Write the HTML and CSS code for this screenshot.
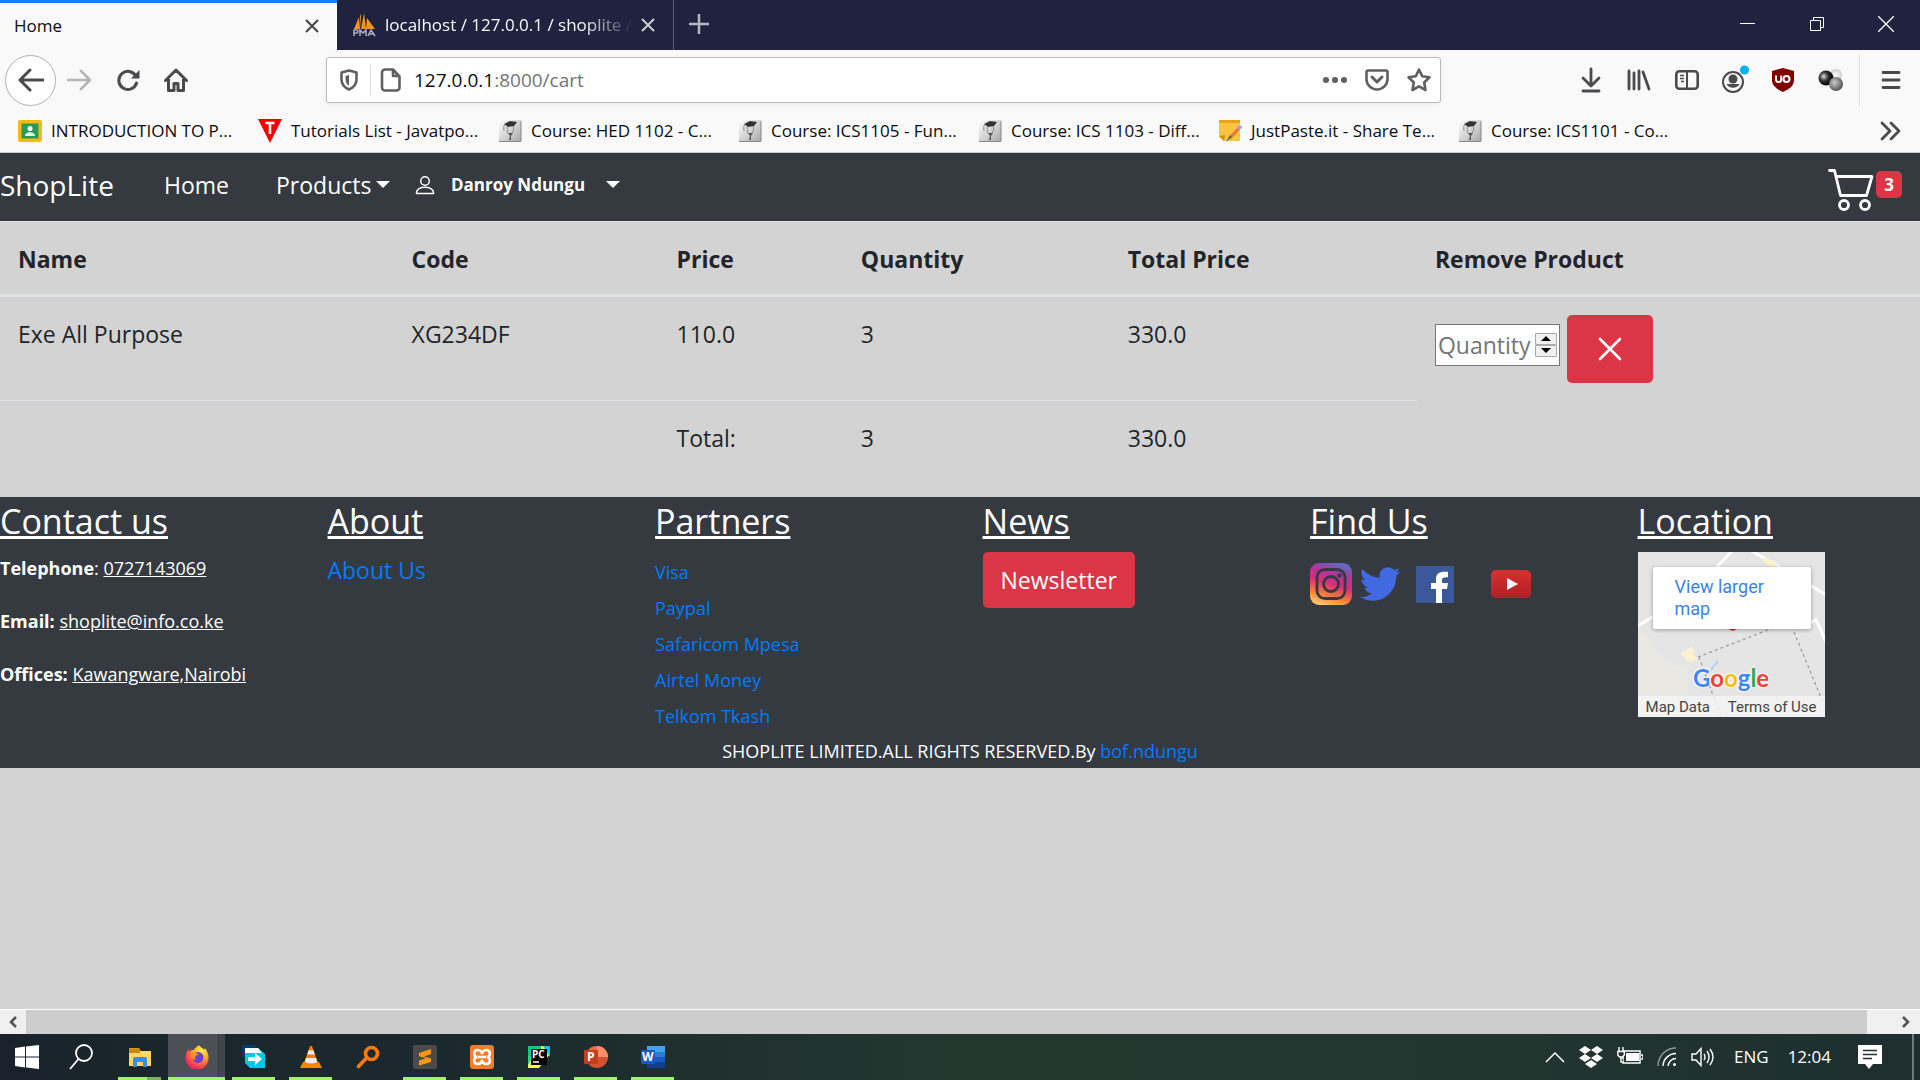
FILE: index.html
```html
<!DOCTYPE html>
<html lang="en">
<head>
<meta charset="utf-8">
<meta name="viewport" content="width=device-width, initial-scale=1">
<title>Home</title>
<link rel="stylesheet" href="styles.css">
</head>
<body>
<svg class="defs" aria-hidden="true">
  <defs>
    <linearGradient id="moodle-bg" x1="0" y1="0" x2="1" y2="1"><stop offset="0" stop-color="#fff"/><stop offset="1" stop-color="#a8a8a8"/></linearGradient>
    <linearGradient id="insta-bg" x1=".35" y1="1" x2=".65" y2="0"><stop offset="0" stop-color="#fdc468"/><stop offset=".22" stop-color="#fa7e3a"/><stop offset=".5" stop-color="#d62e77"/><stop offset=".75" stop-color="#b0359a"/><stop offset="1" stop-color="#5b6cc0"/></linearGradient>
    <linearGradient id="yt-bg" x1="0" y1="0" x2="0" y2="1"><stop offset="0" stop-color="#d8302f"/><stop offset="1" stop-color="#ae2026"/></linearGradient>
    <radialGradient id="fox-bg" cx=".7" cy=".2" r=".9"><stop offset="0" stop-color="#fff14f"/><stop offset=".45" stop-color="#ff9a2a"/><stop offset=".8" stop-color="#ff3a50"/><stop offset="1" stop-color="#e31587"/></radialGradient>
    <radialGradient id="ball-dark" cx=".35" cy=".4" r=".6"><stop offset="0" stop-color="#ddd"/><stop offset=".5" stop-color="#333"/><stop offset="1" stop-color="#000"/></radialGradient>
    <radialGradient id="ball-mid" cx=".4" cy=".4" r=".6"><stop offset="0" stop-color="#ccc"/><stop offset="1" stop-color="#555"/></radialGradient>
    <radialGradient id="ball-light" cx=".5" cy=".5" r=".5"><stop offset="0" stop-color="#fff"/><stop offset="1" stop-color="#ccc"/></radialGradient>
    <symbol id="moodle" viewBox="0 0 24 24">
      <rect x="1" y="1" width="22" height="22" rx="1" fill="url(#moodle-bg)"/>
      <path d="M1 22.500h22V2" fill="none" stroke="#888"/>
      <path d="M6 5l6-3 7 1-3 4-6 1z" fill="#333"/>
      <path d="M7 5c-2 3-1 4-1 7M9 8c1 3-1 4 2 7M15 7c1 3 1 5-2 8" fill="none" stroke="#888"/>
      <path d="M10 14h5l-2 3v4h-2l1-4z" fill="#555"/>
    </symbol>
  </defs>
</svg>

<header class="browser">
  <div class="tabstrip">
    <div class="tab tab-active"><span class="tab-title">Home</span>
      <button class="tab-close" aria-label="Close tab"><svg width="14" height="14" viewBox="0 0 14 14"><path d="M1 1l12 12M13 1L1 13" stroke="#444" stroke-width="2"/></svg></button></div>
    <div class="tab tab-idle">
      <svg width="26" height="26" viewBox="0 0 26 26"><path d="M3 17l5-12 1 12zM10 17V2l-1 2M10 17l3-16 2 16zM15 17l1-11 8 11z" fill="#f7941d"/><path d="M3 24v-6h3q2 1.500 0 3H3M9 24v-6l3 3 3-3v6M17 24l3-6 4 6M18.500 22h4" fill="none" stroke="#aab" stroke-width="1.600"/></svg>
      <span class="tab-title tab-title-fade">localhost / 127.0.0.1 / shoplite / </span>
      <button class="tab-close" aria-label="Close tab"><svg width="14" height="14" viewBox="0 0 14 14"><path d="M1 1l12 12M13 1L1 13" stroke="#ccc" stroke-width="2"/></svg></button></div>
    <button class="tab-new" aria-label="New tab"><svg width="22" height="22" viewBox="0 0 22 22"><path d="M11 1v20M1 11h20" stroke="#b5b5bf" stroke-width="2.500"/></svg></button>
    <div class="window-buttons">
      <button aria-label="Minimize"><svg width="16" height="16" viewBox="0 0 16 16"><path d="M0 7.500h15" stroke="#fff"/></svg></button>
      <button aria-label="Restore"><svg width="16" height="16" viewBox="0 0 16 16"><path d="M1.500 4.500h10v10h-10zM4.500 4V1.500h10v10H12" fill="none" stroke="#fff"/></svg></button>
      <button aria-label="Close"><svg width="16" height="16" viewBox="0 0 16 16"><path d="M0 0l16 16M16 0L0 16" stroke="#fff" stroke-width="1.300"/></svg></button>
    </div>
  </div>

  <div class="toolbar">
    <div class="nav-buttons">
      <button class="back" aria-label="Back"><svg width="26" height="24" viewBox="0 0 26 24"><path d="M12 2L2 12l10 10M2 12h23" fill="none" stroke="#4a4a4c" stroke-width="3" stroke-linecap="round" stroke-linejoin="round"/></svg></button>
      <button aria-label="Forward"><svg width="26" height="24" viewBox="0 0 26 24"><path d="M14 3l9 9-9 9M1 12h22" fill="none" stroke="#b5b5b6" stroke-width="2.600" stroke-linecap="round" stroke-linejoin="round"/></svg></button>
      <button aria-label="Reload"><svg width="24" height="24" viewBox="0 0 24 24"><path d="M20 8.500A9 9 0 1 0 20.500 15" fill="none" stroke="#4a4a4c" stroke-width="3" stroke-linecap="round"/><path d="M23.500 2v8.500H15z" fill="#4a4a4c"/></svg></button>
      <button aria-label="Home page"><svg width="24" height="24" viewBox="0 0 24 24"><path d="M1.500 12.500L12 2l10.500 10.500M4.500 11v11.500h5.500v-7h4v7h5.500V11" fill="none" stroke="#4a4a4c" stroke-width="3" stroke-linejoin="round" stroke-linecap="round"/></svg></button>
    </div>
    <div class="urlbar">
      <svg width="20" height="24" viewBox="0 0 20 24"><path d="M10 2.500l7.500 2v7c0 5-3 8-7.500 10-4.500-2-7.500-5-7.500-10v-7z" fill="none" stroke="#5f5f61" stroke-width="2.600" stroke-linejoin="round"/><path d="M10 7v11c-2.500-2-3.500-4-3.500-7V8z" fill="#5f5f61"/></svg>
      <span class="url-divider"></span>
      <svg width="22" height="26" viewBox="0 0 22 26"><path d="M5 2.500h8l6.500 7v11a3 3 0 0 1-3 3H5a3 3 0 0 1-3-3v-15a3 3 0 0 1 3-3zM13 3v6h6" fill="none" stroke="#5f5f61" stroke-width="2.600" stroke-linejoin="round"/></svg>
      <span class="url"><b>127.0.0.1</b>:8000/cart</span>
      <button aria-label="Page actions"><svg width="26" height="24" viewBox="0 0 26 24" fill="#5f5f61"><circle cx="4" cy="12" r="3"/><circle cx="13" cy="12" r="3"/><circle cx="22" cy="12" r="3"/></svg></button>
      <button aria-label="Save to Pocket"><svg width="26" height="24" viewBox="0 0 26 24"><path d="M4 2.500h18a1.500 1.500 0 0 1 1.500 1.500v7a10.500 10.500 0 0 1-21 0V4A1.500 1.500 0 0 1 4 2.500z" fill="none" stroke="#5f5f61" stroke-width="2.600"/><path d="M8 9l5 5 5-5" fill="none" stroke="#5f5f61" stroke-width="3" stroke-linecap="round" stroke-linejoin="round"/></svg></button>
      <button aria-label="Bookmark this page"><svg width="26" height="26" viewBox="0 0 26 26"><path d="M13 2.500l3.200 6.800 7.300 1-5.300 5.200 1.300 7.500-6.500-3.600L6.500 23l1.300-7.500-5.300-5.200 7.300-1z" fill="none" stroke="#5f5f61" stroke-width="2.600" stroke-linejoin="round"/></svg></button>
    </div>
    <div class="tool-buttons">
      <button aria-label="Downloads"><svg width="24" height="26" viewBox="0 0 24 26"><path d="M12 2v16M4 11l8 8 8-8M4 24h16" fill="none" stroke="#4a4a4c" stroke-width="2.800" stroke-linecap="round" stroke-linejoin="round"/></svg></button>
      <button aria-label="Library"><svg width="24" height="24" viewBox="0 0 24 24"><path d="M2 3v18M7 5v16M12 3v18M16 4l6 17" fill="none" stroke="#4a4a4c" stroke-width="2.800" stroke-linecap="round"/></svg></button>
      <button aria-label="Sidebars"><svg width="24" height="24" viewBox="0 0 24 24"><rect x="1.300" y="3.300" width="21.400" height="17.400" rx="3" fill="none" stroke="#4a4a4c" stroke-width="2.600"/><path d="M12 3v18" stroke="#4a4a4c" stroke-width="2"/><path d="M5 7.500h4M5 10.500h4M6 13.500h3" stroke="#4a4a4c" stroke-width="1.400"/></svg></button>
      <button aria-label="Account"><svg width="28" height="30" viewBox="0 0 28 30"><circle cx="12" cy="17" r="10" fill="none" stroke="#4a4a4c" stroke-width="2"/><circle cx="12" cy="14" r="4.500" fill="#4a4a4c"/><path d="M5.500 19h13a7.500 7.500 0 0 1-13 0z" fill="#4a4a4c"/><circle cx="23.500" cy="5" r="4.500" fill="#00b3f4"/></svg></button>
      <button aria-label="uBlock Origin"><svg width="24" height="26" viewBox="0 0 24 26"><path d="M12 1l11 3v9c0 6-5 9-11 12C6 22 1 19 1 13V4z" fill="#800000"/><path d="M5 8.500v4a2.600 2.600 0 0 0 5.200 0v-4M10.200 8.500v6" fill="none" stroke="#fff" stroke-width="2"/><circle cx="15.500" cy="12" r="3" fill="none" stroke="#fff" stroke-width="2"/></svg></button>
      <button aria-label="Extension"><svg width="26" height="26" viewBox="0 0 26 26"><circle cx="18" cy="8" r="6" fill="url(#ball-light)"/><circle cx="8" cy="11" r="7.500" fill="url(#ball-dark)"/><circle cx="18" cy="17" r="7" fill="url(#ball-mid)"/></svg></button>
      <span class="tool-divider"></span>
      <button aria-label="Menu"><svg width="22" height="24" viewBox="0 0 22 24"><path d="M3 4.500h16M3 12h16M3 19.500h16" stroke="#4a4a4c" stroke-width="2.800" stroke-linecap="round"/></svg></button>
    </div>
  </div>

  <nav class="bookmarks" aria-label="Bookmarks">
    <a href="#"><svg width="24" height="24" viewBox="0 0 24 24"><rect y="1" width="24" height="22" rx="2" fill="#f5ba15"/><rect x="3.500" y="4.500" width="17" height="15" fill="#2a9a57"/><circle cx="12" cy="9.500" r="2.500" fill="#fff"/><path d="M7 17c0-5 10-5 10 0z" fill="#e8f5e9"/></svg>INTRODUCTION TO P...</a>
    <a href="#"><svg width="24" height="24" viewBox="0 0 24 24"><path d="M0 0h24L12 24z" fill="#f60000"/><path d="M7.500 4h9M12 4v11" stroke="#fff" stroke-width="2.600"/></svg>Tutorials List - Javatpo...</a>
    <a href="#"><svg width="24" height="24"><use href="#moodle"/></svg>Course: HED 1102 - C...</a>
    <a href="#"><svg width="24" height="24"><use href="#moodle"/></svg>Course: ICS1105 - Fun...</a>
    <a href="#"><svg width="24" height="24"><use href="#moodle"/></svg>Course: ICS 1103 - Diff...</a>
    <a href="#"><svg width="24" height="24" viewBox="0 0 24 24"><path d="M1 1h21v21H6l-5-4z" fill="#f9c440"/><path d="M1 1h21v3H1z" fill="#e6a51d"/><path d="M1 17l6-1-1 6z" fill="#d18f12"/><path d="M22 8L12 19" stroke="#e8743b" stroke-width="3"/><path d="M20 10l3-3" stroke="#b79ad8" stroke-width="3.500"/><path d="M12 16l-4 7 6-5z" fill="#665"/></svg>JustPaste.it - Share Te...</a>
    <a href="#"><svg width="24" height="24"><use href="#moodle"/></svg>Course: ICS1101 - Co...</a>
    <button class="bookmarks-more" aria-label="More bookmarks"><svg width="22" height="20" viewBox="0 0 22 20"><path d="M2 2l8 8-8 8M11 2l8 8-8 8" fill="none" stroke="#4a4a4c" stroke-width="2.800" stroke-linecap="round" stroke-linejoin="round"/></svg></button>
  </nav>
</header>

<div class="page">
  <nav class="navbar">
    <a class="brand" href="#">ShopLite</a>
    <a class="nav-home" href="#">Home</a>
    <button class="nav-products">Products<span class="caret"></span></button>
    <svg class="user-icon" width="20" height="20" viewBox="0 0 20 20" fill="none" stroke="#fff" stroke-width="1.500"><circle cx="10" cy="6" r="4.300"/><path d="M1.500 18.500v-1c0-7 17-7 17 0v1z" stroke-linejoin="round"/></svg>
    <button class="nav-user">Danroy Ndungu<span class="caret"></span></button>
    <a class="cart" href="#" aria-label="Cart">
      <svg width="46" height="46" viewBox="0 0 46 46" fill="none" stroke="#fff" stroke-width="2.800" stroke-linecap="round" stroke-linejoin="round"><path d="M1.500 3.500h5l6 25h26l5.500-19H8"/><circle cx="16" cy="38" r="4.500"/><circle cx="37" cy="38" r="4.500"/></svg>
      <span class="badge">3</span>
    </a>
  </nav>

  <main>
    <table class="cart-table">
      <colgroup><col class="c-name"><col class="c-code"><col class="c-price"><col class="c-qty"><col class="c-total"><col></colgroup>
      <thead><tr><th>Name</th><th>Code</th><th>Price</th><th>Quantity</th><th>Total Price</th><th>Remove Product</th></tr></thead>
      <tbody>
        <tr class="item"><td>Exe All Purpose</td><td>XG234DF</td><td>110.0</td><td>3</td><td>330.0</td>
          <td class="actions"><form class="remove-form">
            <span class="number-field"><input type="number" placeholder="Quantity" aria-label="Quantity"><svg width="22" height="24" viewBox="0 0 22 24" aria-hidden="true"><path d="M.5.5h21v11H.5zM.5 12.500h21v11H.500z" fill="#f0f0f0" stroke="#aaa"/><path d="M6 8l5-5 5 5zM6 15h10l-5 5z" fill="#000"/></svg></span>
            <button class="btn btn-remove" type="button" aria-label="Remove product"><svg width="24" height="24" viewBox="0 0 24 24"><path d="M2 2l20 20M22 2L2 22" stroke="#fff" stroke-width="2.600" stroke-linecap="round"/></svg></button>
          </form></td></tr>
        <tr><td></td><td></td><td>Total:</td><td>3</td><td>330.0</td></tr>
      </tbody>
    </table>
  </main>

  <footer class="footer">
    <div class="footer-grid">
      <section class="contact"><h2>Contact us</h2>
        <p><b>Telephone</b>: <u>0727143069</u></p>
        <p><b>Email:</b> <u>shoplite@info.co.ke</u></p>
        <p><b>Offices:</b> <u>Kawangware,Nairobi</u></p></section>
      <section><h2>About</h2><a href="#">About Us</a></section>
      <section><h2>Partners</h2>
        <ul class="partners"><li><a href="#">Visa</a></li><li><a href="#">Paypal</a></li><li><a href="#">Safaricom Mpesa</a></li><li><a href="#">Airtel Money</a></li><li><a href="#">Telkom Tkash</a></li></ul></section>
      <section><h2>News</h2><button class="btn btn-news">Newsletter</button></section>
      <section><h2>Find Us</h2>
        <div class="social">
          <a href="#" aria-label="Instagram"><svg width="42" height="42" viewBox="0 0 42 42"><rect width="42" height="42" rx="9" fill="url(#insta-bg)"/><g fill="none" stroke="#343a40" stroke-width="2.800"><rect x="7" y="6.500" width="28" height="29" rx="8"/><circle cx="21" cy="21" r="7.500"/></g><circle cx="29.500" cy="12.500" r="2.200" fill="#343a40"/></svg></a>
          <a href="#" aria-label="Twitter"><svg width="50" height="42" viewBox="0 0 50 42"><path d="M41.500 8.200c-1.500.7-3.100 1.100-4.800 1.300 1.700-1 3-2.600 3.700-4.500-1.600.9-3.400 1.600-5.300 2a8.400 8.400 0 0 0-14.300 7.600C13.900 14.300 7.700 10.900 3.600 5.900c-2.200 3.800-1.100 8.700 2.600 11.200-1.400 0-2.700-.4-3.800-1 0 3.900 2.700 7.500 6.700 8.300-1.200.3-2.500.4-3.800.1a8.400 8.400 0 0 0 7.800 5.800A16.800 16.800 0 0 1 .7 33.800C17.700 44.500 37.400 32.500 37.400 12.500c1.600-1.200 3-2.600 4.100-4.300z" fill="#4169e1"/></svg></a>
          <a href="#" aria-label="Facebook"><svg width="67" height="42" viewBox="0 0 67 42"><rect y="3" width="38" height="37" rx="1" fill="#3b5998"/><path d="M20 40V26h-5v-6h5v-4c0-6 4-8 12-7.200v5.500c-4-.3-6 .2-6 3V20h6l-1 6h-5v14z" fill="#fff"/></svg></a>
          <a href="#" aria-label="YouTube"><svg width="42" height="42" viewBox="0 0 42 42"><rect x="1" y="7" width="40" height="28" rx="5" fill="url(#yt-bg)"/><path d="M17 15l11 6-11 6z" fill="#fff"/></svg></a>
        </div></section>
      <section><h2>Location</h2>
        <div class="map">
          <svg class="map-canvas" viewBox="0 0 187 165" preserveAspectRatio="none" aria-hidden="true"><rect width="187" height="165" fill="#e5e5e5"/><path d="M0 74c15 15 20 42 50 40v51H0z" fill="#e9e8e2"/><g fill="none" stroke="#fff" stroke-width="3"><path d="M95-2L78 16M110-3l32 18M170 32l20 12M-2 75l20-12M170 72l8-4 12 26"/></g><path d="M126 7l12 8" stroke="#fdf0c4" stroke-width="5"/><path d="M44 102l9-6 3 3-3 3 5 5-7 2z" fill="#fdf2d0" stroke="#fdf2d0" stroke-width="2"/><path d="M60 105l80-31M61 105l22 60M156 80l30 73" fill="none" stroke="#999" stroke-width="1.200" stroke-dasharray="3 3"/><path d="M73 118l7-9" stroke="#9fd0f5" stroke-width="1.500"/><path d="M90 77h9l-4 2z" fill="#d33"/></svg>
          <a class="map-card" href="#">View larger map</a>
          <span class="google"><i>G</i><i>o</i><i>o</i><i>g</i><i>l</i><i>e</i></span>
          <div class="map-legal"><a href="#">Map Data</a><a href="#">Terms of Use</a></div>
        </div></section>
    </div>
    <p class="copyright">SHOPLITE LIMITED.ALL RIGHTS RESERVED.By <a href="#">bof.ndungu</a></p>
  </footer>
</div>

<div class="hscroll">
  <button class="hscroll-left" aria-label="Scroll left"><svg width="12" height="12" viewBox="0 0 12 12"><path d="M9 1L4 6l5 5" fill="none" stroke="#555" stroke-width="2.600"/></svg></button>
  <div class="hscroll-thumb"></div>
  <button class="hscroll-right" aria-label="Scroll right"><svg width="12" height="12" viewBox="0 0 12 12"><path d="M3 1l5 5-5 5" fill="none" stroke="#555" stroke-width="2.600"/></svg></button>
</div>

<footer class="taskbar">
  <button class="start" aria-label="Start"><svg width="24" height="24" viewBox="0 0 24 24" fill="#fff"><path d="M0 3l10-1.500V11.500H0zM11 1.400L24 0v11.500H11zM0 12.500h10v10L0 21zM11 12.500h13V24l-13-1.500z"/></svg></button>
  <button class="start" aria-label="Search"><svg width="24" height="26" viewBox="0 0 24 26" fill="none" stroke="#fff" stroke-width="1.800"><circle cx="15" cy="9" r="8"/><path d="M9.500 15L1 25"/></svg></button>
  <button class="app app-open app-stack" aria-label="File Explorer"><svg width="24" height="24" viewBox="0 0 24 24"><path d="M1 3h10l2 3H1z" fill="#d99a1a"/><path d="M1 6h22v15H1z" fill="#fdd663"/><path d="M1 4h11v4H1z" fill="#c98a10"/><path d="M5 22v-8q0-2 2-2h10q2 0 2 2v8h-4v-5H9v5z" fill="#3a8dde"/></svg></button>
  <button class="app app-open app-current" aria-label="Firefox"><svg width="24" height="24" viewBox="0 0 24 24"><path d="M14 0c2 3 4 3 5 5l1-2c2 3 4 6 3.500 11A11.500 11 0 0 1 .5 13C.5 9 2 6 4 4v3c2-2 3-2 5-2 1-3 3-3 5-5z" fill="url(#fox-bg)"/><circle cx="13" cy="12.500" r="5.500" fill="#6a3fd0"/><path d="M7 8c3-1 5 0 7 2-3 0-5 2-3 5-4 0-6-4-4-7z" fill="#ff8a1f"/></svg></button>
  <button class="app app-open" aria-label="Share"><svg width="24" height="24" viewBox="0 0 24 24"><path d="M0 0h14v6H4v7H0z" fill="#003c62"/><path d="M3 3h13l7 6v14H8l-5-5z" fill="#00c8e6"/><path d="M3 3h13l4 5H3z" fill="#fff"/><path d="M6 12h7V8l7 6-7 6v-4H6z" fill="#fff"/></svg></button>
  <button class="app app-open" aria-label="VLC"><svg width="24" height="24" viewBox="0 0 24 24"><path d="M4 17h16l3 6H1z" fill="#f08a00"/><path d="M11 1h2l6 17q-7 4-14 0z" fill="#f47b00"/><path d="M9.500 5.500h5l1.300 4H8.200zM7 13h10l1.300 4q-6 3-12.600 0z" fill="#eee"/></svg></button>
  <button class="app" aria-label="Everything"><svg width="24" height="24" viewBox="0 0 24 24" fill="none" stroke="#ff7a05" stroke-width="3.600" stroke-linecap="round"><circle cx="15.500" cy="8.500" r="6"/><path d="M10.500 13L2.500 21.500"/></svg></button>
  <button class="app app-open" aria-label="Sublime Text"><svg width="24" height="24" viewBox="0 0 24 24"><rect width="24" height="24" rx="2" fill="#4b4b4b"/><path d="M18 4v5l-7 2.500 7 2V17L6 20.500v-5l7-2.300-7-2V8z" fill="#ff9800"/></svg></button>
  <button class="app app-open" aria-label="XAMPP"><svg width="24" height="24" viewBox="0 0 24 24"><rect width="24" height="24" rx="3" fill="#fb7a24"/><path d="M8 5c-5 0-5 6-1 7-4 1-4 7 1 7 3 0 3-2 4-3 1 1 1 3 4 3 5 0 5-6 1-7 4-1 4-7-1-7-3 0-3 2-4 3-1-1-1-3-4-3zM8 12h8" fill="none" stroke="#fff" stroke-width="2.600"/></svg></button>
  <button class="app app-open" aria-label="PyCharm"><svg width="24" height="24" viewBox="0 0 24 24"><path d="M1 1h15L8 23H1z" fill="#21d789"/><path d="M12 1h11v8L12 23H1v-3z" fill="#fcf84a"/><path d="M1 1h13v10H1z" fill="#14c77a"/><path d="M16 1h7v11z" fill="#07c3f2"/><rect x="4" y="4" width="16" height="16" fill="#000"/><text x="5" y="13" class="glyph-pc">PC</text><path d="M6 17h6" stroke="#fff" stroke-width="1.500"/></svg></button>
  <button class="app app-open" aria-label="PowerPoint"><svg width="24" height="24" viewBox="0 0 24 24"><circle cx="13" cy="12" r="11" fill="#d35230"/><path d="M13 1a11 11 0 0 1 11 11H13z" fill="#ff8f6b"/><path d="M13 1A11 11 0 0 0 3 7v5h10z" fill="#ed6c47"/><rect y="5" width="14" height="14" rx="1" fill="#c43e1c"/><text x="3" y="16" class="glyph">P</text></svg></button>
  <button class="app app-open" aria-label="Word"><svg width="24" height="24" viewBox="0 0 24 24"><path d="M6 1h18v6H6z" fill="#41a5ee"/><path d="M6 7h18v5H6z" fill="#2b7cd3"/><path d="M6 12h18v5H6z" fill="#185abd"/><path d="M6 17h18v6H6z" fill="#103f91"/><rect y="5" width="14" height="14" rx="1" fill="#185abd"/><text x="1" y="16" class="glyph">W</text></svg></button>

  <div class="tray">
    <svg width="20" height="12" viewBox="0 0 20 12" fill="none" stroke="#fff" stroke-width="1.500"><path d="M1 11l9-9 9 9"/></svg>
    <svg width="24" height="22" viewBox="0 0 24 22" fill="#fff"><path d="M6 0l6 4-6 4-6-4zM18 0l6 4-6 4-6-4zM6 8l6 4-6 4-6-4zM18 8l6 4-6 4-6-4zM12 14l6 4-6 4-6-4z"/></svg>
    <svg width="26" height="20" viewBox="0 0 26 20"><path d="M6 4h17v12H6zM24 8h2v4h-2" fill="none" stroke="#fff" stroke-width="1.500"/><path d="M9 6h13v8H9z" fill="#fff"/><path d="M2 0v4M6 0v4M.8 4.500h6.500V8L5.500 10h-3L.8 8zM4 10v5h3" fill="#21322f" stroke="#fff" stroke-width="1.400"/></svg>
    <svg width="20" height="20" viewBox="0 0 20 20" fill="none" stroke="#fff" stroke-width="1.400"><path d="M1 19A18 18 0 0 1 19 1" opacity=".5"/><path d="M6 19A13 13 0 0 1 19 6.500M11 19a8 8 0 0 1 8-7.500"/><circle cx="17.500" cy="17.500" r="1.500" fill="#fff" stroke="none"/></svg>
    <svg width="24" height="20" viewBox="0 0 24 20" fill="none" stroke="#fff" stroke-width="1.400"><path d="M1 7h4l5-5.500v17L5 13H1zM13 7q2 3 0 6M16 4q4 6 0 12M19 2q6 8 0 16"/></svg>
    <span>ENG</span><span>12:04</span>
    <svg class="notify" width="24" height="24" viewBox="0 0 24 24"><path d="M0 0h24v19H15l-4 5-4-5H0z" fill="#fff"/><path d="M5 5.500h14M5 9.500h14M5 13.500h9" stroke="#21322f" stroke-width="1.300"/></svg>
  </div>
</footer>
</body>
</html>
```
FILE: styles.css
```css
* { box-sizing: border-box; }

body {
  margin: 0;
  min-height: 100vh;
  display: flex;
  flex-direction: column;
  background: #d3d3d3;
  color: #212529;
  font-family: "Open Sans", "Noto Sans", sans-serif;
  font-size: 23px;
  line-height: 36px;
}

button {
  border: 0;
  padding: 0;
  background: none;
  color: inherit;
  font: inherit;
  display: flex;
  align-items: center;
  justify-content: center;
}

a { color: #007bff; text-decoration: none; }
p, h2, ul { margin: 0; padding: 0; }
svg { display: block; flex: none; }
.defs { position: absolute; width: 0; height: 0; }

/* Browser window */
.browser {
  background: #f9f9fa;
  color: #0c0c0d;
  font-size: 17px;
  line-height: 24px;
  border-bottom: 1px solid #ccc;
}

.tabstrip {
  display: flex;
  height: 50px;
  background: #202340;
}

.tab {
  width: 337px;
  display: flex;
  align-items: center;
  padding: 0 18px 0 14px;
  gap: 8px;
}
.tab-active { background: #f9f9fa; border-top: 3px solid #0a84ff; padding-bottom: 2px; }
.tab-idle { color: #f9f9fa; border-right: 1px solid #5a5c74; }
.tab-title { flex: 1; overflow: hidden; white-space: nowrap; }
.tab-title-fade {
  -webkit-mask-image: linear-gradient(to right, #000 80%, transparent);
  mask-image: linear-gradient(to right, #000 80%, transparent);
}
.tab-new { width: 50px; padding-bottom: 2px; }
.window-buttons { margin-left: auto; display: flex; }
.window-buttons button { width: 69px; padding-bottom: 2px; }

.toolbar {
  display: flex;
  align-items: center;
  height: 60px;
  padding: 0 6px 0 5px;
}
.nav-buttons { display: flex; align-items: center; width: 321px; }
.nav-buttons button { width: 48px; height: 51px; }
.nav-buttons .back { width: 51px; border: 1px solid #b1b1b3; border-radius: 50%; background: #fff; }

.urlbar {
  flex: 1;
  display: flex;
  align-items: center;
  height: 46px;
  padding: 0 0 0 12px;
  background: #fff;
  border: 1px solid #bbb;
  border-radius: 3px;
  box-shadow: 0 1px 4px #0001;
}
.url-divider { width: 1px; height: 30px; margin: 0 9px 0 11px; background: #ddd; }
.url { flex: 1; margin-left: 12px; font-size: 19px; color: #737373; }
.url b { font-weight: 400; color: #0c0c0d; }
.urlbar button { width: 42px; }

.tool-buttons { display: flex; align-items: center; margin-left: 126px; }
.tool-buttons button { width: 48px; height: 48px; }
.tool-buttons button:last-child { width: 46px; }
.tool-divider { width: 1px; height: 51px; margin: 0 8px 0 4px; background: #ddd; }

.bookmarks {
  display: flex;
  align-items: center;
  height: 42px;
  padding: 0 18px;
}
.bookmarks a {
  display: flex;
  align-items: center;
  gap: 9px;
  width: 240px;
  color: #0c0c0d;
  white-space: nowrap;
}
.bookmarks-more { margin-left: auto; }

/* Shop page */
.page { flex: 1; }

.navbar {
  display: flex;
  align-items: center;
  height: 68px;
  padding: 0 18px 4px 0;
  background: #343a40;
  color: #fff;
}
.navbar a { color: #fff; }
.brand { width: 164px; font-size: 28px; }
.nav-home { width: 112px; }
.nav-products { width: 139px; justify-content: flex-start; gap: 5px; }
.user-icon { margin-right: 16px; }
.nav-user { gap: 21px; font-size: 17px; font-weight: 700; }
.caret {
  border: 7px solid transparent;
  border-top-color: #fff;
  border-bottom: 0;
  margin-bottom: 2px;
}
.cart { margin-left: auto; display: flex; align-items: center; gap: 2px; padding-top: 10px; }
.badge {
  margin-bottom: 12px;
  padding: 0 8px;
  border-radius: 5px;
  background: #dc3545;
  font-size: 17px;
  font-weight: 700;
  line-height: 27px;
}

.cart-table {
  width: 100%;
  margin-bottom: 24px;
  border-spacing: 0;
  table-layout: fixed;
}
.c-name { width: 20.5%; }
.c-code { width: 13.8%; }
.c-price { width: 9.6%; }
.c-qty { width: 13.9%; }
.c-total { width: 16%; }
.cart-table th, .cart-table td { padding: 19px 18px 17px; text-align: left; vertical-align: top; }
.cart-table th { border-top: 1px solid #dee2e6; border-bottom: 3px solid #dee2e6; }
.item td { border-bottom: 1px solid #dee2e6; }
.cart-table .actions { padding: 18px; border-bottom: 0; }

.remove-form { display: flex; gap: 7px; }
.number-field {
  display: flex;
  align-items: center;
  width: 125px;
  height: 42px;
  margin-top: 9px;
  padding: 0 2px;
  background: #fff;
  border: 1px solid #767676;
}
.number-field input {
  flex: 1;
  min-width: 0;
  padding: 0;
  border: 0;
  background: none;
  font: inherit;
  appearance: textfield;
}
.number-field input::-webkit-inner-spin-button { display: none; }
.number-field input::placeholder { color: #757575; }
.btn { background: #dc3545; color: #fff; border-radius: 5px; }
.btn-remove { width: 86px; height: 68px; }
.btn-news { padding: 10px 18px; }

.footer { background: #343a40; color: #fff; }
.footer-grid { display: grid; grid-template-columns: repeat(5, 327fr) 282fr; }
.footer h2 {
  padding-top: 3px;
  margin-bottom: 9px;
  font-size: 34px;
  font-weight: 400;
  line-height: 43px;
  text-decoration: underline;
}
.contact p { font-size: 18px; line-height: 33px; margin-bottom: 20px; }
.partners { list-style: none; padding-top: 2px; font-size: 18px; }
.copyright { text-align: center; font-size: 18px; line-height: 34px; }
.social { display: flex; gap: 7px; padding-top: 11px; }

.map {
  position: relative;
  display: flex;
  flex-direction: column;
  width: 187px;
  height: 165px;
  padding-top: 15px;
  font-family: Roboto, sans-serif;
}
.map-canvas { position: absolute; inset: 0; width: 100%; height: 100%; }
.map-card {
  position: relative;
  margin: 0 14px 0 15px;
  padding: 9px 22px;
  background: #fff;
  border-radius: 2px;
  box-shadow: 0 1px 4px #0005;
  color: #3a84df;
  font-size: 18px;
  line-height: 22px;
}
.google {
  position: relative;
  margin: auto 0 3px;
  text-align: center;
  font-family: Lato, sans-serif;
  font-size: 24px;
  font-weight: 700;
  line-height: 30px;
  text-shadow: 0 0 2px #fff, 0 0 2px #fff, 0 0 3px #fff;
}
.google i { font-style: normal; color: #4285f4; }
.google i:nth-child(2), .google i:nth-child(6) { color: #ea4335; }
.google i:nth-child(3) { color: #fbbc05; }
.google i:nth-child(5) { color: #34a853; }
.map-legal {
  position: relative;
  display: flex;
  justify-content: space-between;
  padding: 2px 8px 0;
  background: #f5f5f5cc;
  font-size: 15px;
  line-height: 19px;
}
.map-legal a { color: #444; }

/* Horizontal scroll bar */
.hscroll { display: flex; height: 25px; border-top: 1px solid #fff; background: #f0f0f0; }
.hscroll-left { width: 26px; }
.hscroll-thumb { flex: 1; background: #cdcdcd; }
.hscroll-right { width: 53px; justify-content: flex-end; padding-right: 8px; }

/* Taskbar */
.taskbar {
  display: flex;
  height: 46px;
  background: linear-gradient(to right, #1a232b, #1b2a2e 25%, #24372f 50%, #22352f 80%, #1e2e31);
  color: #fff;
  font-size: 17px;
}
.start { width: 54px; }
.app {
  position: relative;
  width: 57px;
}
.start + .app { margin-left: 3px; }
.app-open::after {
  content: "";
  position: absolute;
  inset: auto 7px 0;
  height: 3px;
  background: #a0f36c;
}
.app-stack::after { background: linear-gradient(to right, #a0f36c 68%, #78b35a 68%); }
.app-current { background: linear-gradient(to right, #4a5056 88%, #34393f 88%, #42474d 91%); }
.app-current::after { inset: auto 0 0; }
.glyph, .glyph-pc { fill: #fff; font-size: 12px; font-weight: 700; }
.glyph-pc { font-size: 10px; }

.tray {
  margin-left: auto;
  display: flex;
  align-items: center;
  gap: 14px;
  padding-right: 30px;
  border-right: 2px solid #6f7c7b;
  margin-right: 6px;
}
.tray span { margin-left: 5px; }
.notify { margin-left: 13px; }
```
